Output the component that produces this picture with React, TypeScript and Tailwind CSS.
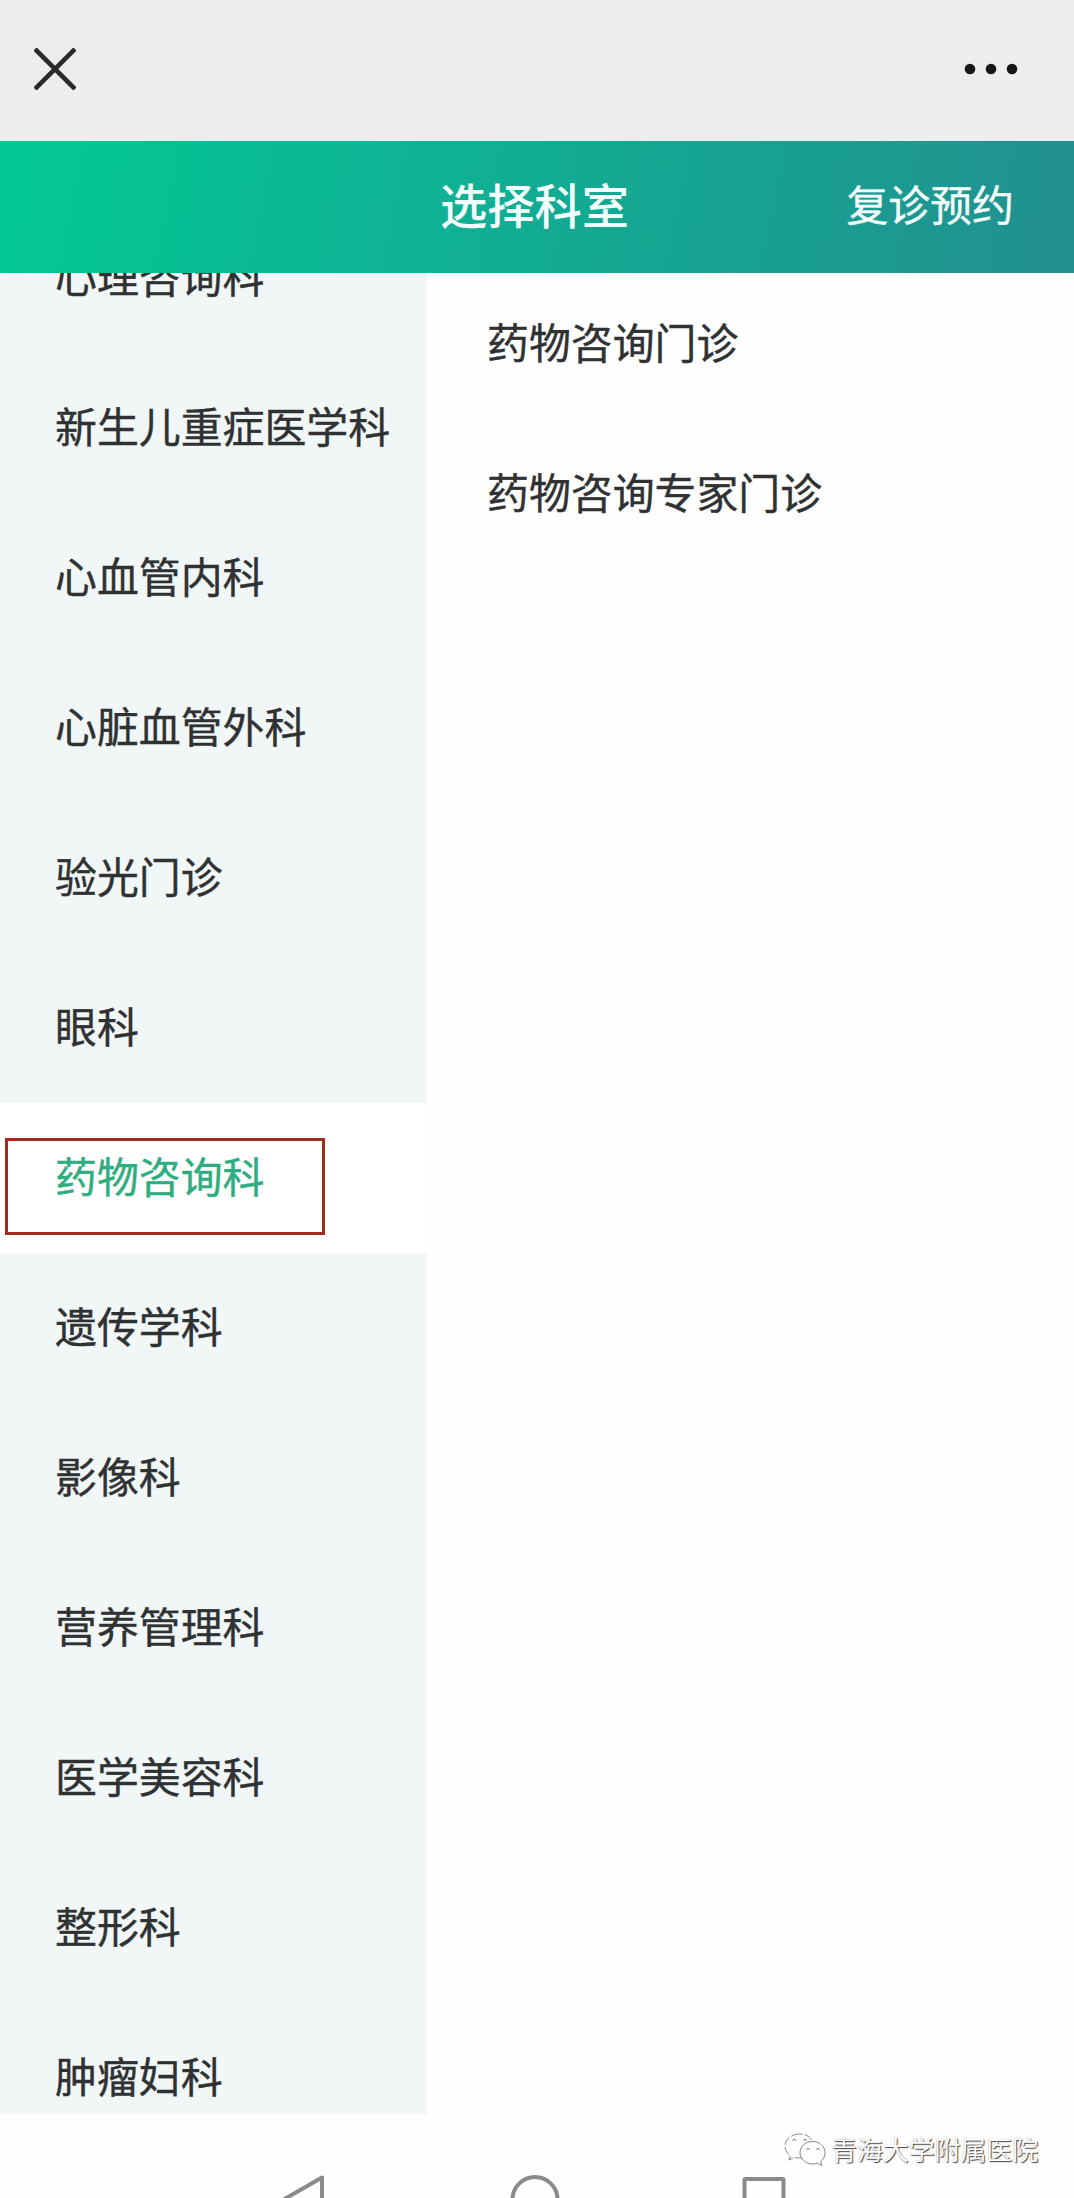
const departments = [
  '心理咨询科',
  '新生儿重症医学科',
  '心血管内科',
  '心脏血管外科',
  '验光门诊',
  '眼科',
  '药物咨询科',
  '遗传学科',
  '影像科',
  '营养管理科',
  '医学美容科',
  '整形科',
  '肿瘤妇科',
];

const clinics = ['药物咨询门诊', '药物咨询专家门诊'];

function BrowserBar() {
  return (
    <div className="flex h-[141px] shrink-0 items-start justify-between bg-[#ededed] pt-[48px] pr-[56px] pl-[34px]">
      <svg width="42" height="42" viewBox="0 0 42 42" fill="none" stroke="#2a2a2a" strokeWidth="4.6">
        <path d="M1 1 41 41M41 1 1 41" />
      </svg>
      <svg width="54" height="42" viewBox="0 0 54 42" fill="#161616">
        <circle cx="6" cy="21" r="5.3" />
        <circle cx="27" cy="21" r="5.3" />
        <circle cx="48" cy="21" r="5.3" />
      </svg>
    </div>
  );
}

function Header() {
  return (
    <header className="z-10 grid h-[132px] shrink-0 grid-cols-[1fr_auto_1fr] items-center bg-[linear-gradient(102deg,#02c994_0%,#0fb394_38%,#15a592_62%,#228f90_100%)] pr-[60px] pb-[7px] pl-[55px] text-[#f2fffc]">
      <span />
      <h1 className="text-[47.300px] leading-none font-medium">选择科室</h1>
      <span className="pb-px text-right text-[41.900px] leading-none [-webkit-text-stroke:0.4px]">复诊预约</span>
    </header>
  );
}

function Sidebar() {
  return (
    <nav className="w-[427px] shrink-0 overflow-hidden bg-[#f1f7f7]">
      <ul className="-mt-[70px]">
        {departments.map((name) =>
          name === '药物咨询科' ? (
            <li key={name} className="relative flex h-[150px] items-center bg-white pb-[6px] pl-[55px] text-[#2fad80]">
              {name}
              <span className="absolute top-[35px] left-[5px] h-[97px] w-[320px] border-3 border-[#a02c1e]" />
            </li>
          ) : (
            <li key={name} className="flex h-[150px] items-center pb-[6px] pl-[55px]">
              {name}
            </li>
          ),
        )}
      </ul>
    </nav>
  );
}

function WeChatMark() {
  return (
    <svg width="44" height="36" viewBox="0 0 44 36" fill="#ffffff" stroke="#777777" strokeWidth="0.9" strokeLinejoin="round">
      <path d="M17 3C8.500 3 2 8.500 2 15c0 4 2.200 7.200 5.500 9.500L6 29l5.500-2.800c1.800.5 3.600.8 5.500.8h2C30 27 31 19 31 14 30 7.500 24 3 17 3Z" strokeDasharray="9 2" />
      <path d="M29.500 10.500C22.500 10.500 17 15.500 17 21.500S22.500 33 29.500 33c1.700 0 3.200-.3 4.700-.8L39 34.500l-1.300-4C40.500 28.300 42 25.200 42 21.500c0-6-5.500-11-12.500-11Z" />
      <path d="M9.500 9.500q1.700-2.500 3.500 0M20.500 9.500q1.700-2.500 3.500 0M23.500 18.500q1.500-2.200 3 0M33.500 18.500q1.500-2.200 3 0" fill="none" stroke="#555555" />
    </svg>
  );
}

function SystemBar() {
  return (
    <footer className="relative h-[84px] shrink-0 overflow-hidden bg-[#fefefe]">
      <div className="flex h-full items-end pl-[276px]">
        <svg width="520" height="26" viewBox="0 0 520 26" fill="none" stroke="#8a8a8a" strokeWidth="4" strokeLinejoin="round">
          <path d="M46 5.500V52L6 28.500Z" />
          <circle cx="259" cy="27.500" r="22.500" />
          <rect x="468.500" y="7" width="39" height="40" rx="1" />
        </svg>
      </div>
      <div className="absolute top-[17px] left-[783px] flex items-center gap-[4px] text-[25.900px] leading-[36px] text-white [text-shadow:1px_1px_1px_#444,0_0_1px_#999]">
        <WeChatMark />
        <span className="whitespace-nowrap">青海大学附属医院</span>
      </div>
    </footer>
  );
}

export default function App() {
  return (
    <div
      lang="zh-CN"
      className="flex h-[2198px] w-[1074px] flex-col overflow-hidden bg-[#fefefe] font-['Noto_Sans_CJK_SC',sans-serif] text-[41.900px] leading-none text-[#2f3132]"
    >
      <BrowserBar />
      <Header />
      <main className="flex h-[1841px] shrink-0 overflow-hidden [-webkit-text-stroke:0.4px]">
        <Sidebar />
        <ul className="flex flex-1 flex-col gap-[108px] pt-[47px] pl-[60px]">
          {clinics.map((name) => (
            <li key={name} className="leading-[42px]">
              {name}
            </li>
          ))}
        </ul>
      </main>
      <SystemBar />
    </div>
  );
}
